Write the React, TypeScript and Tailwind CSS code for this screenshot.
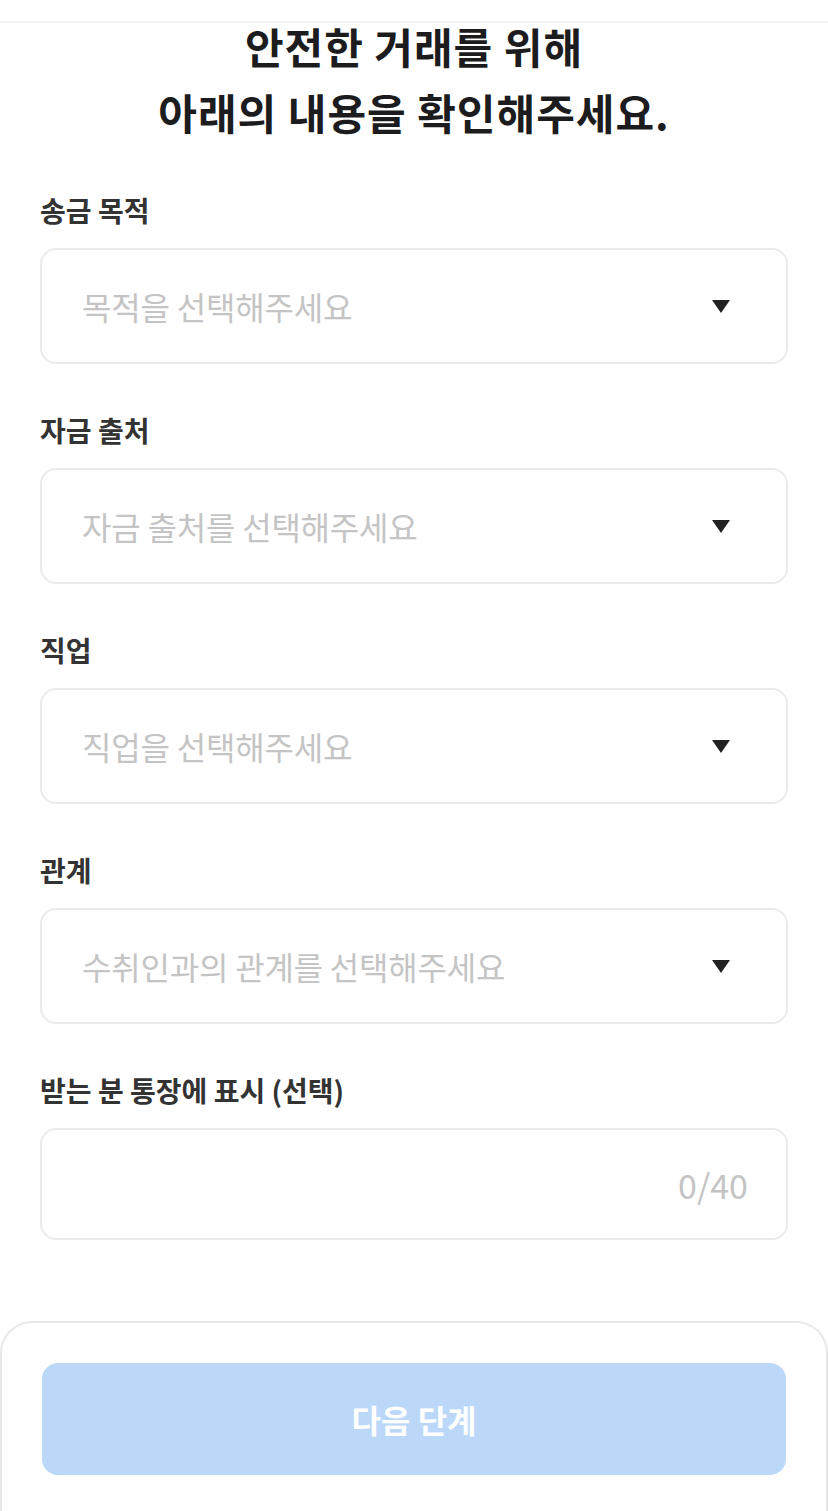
import React from "react";

const font = { fontFamily: '"Noto Sans CJK KR", "Noto Sans", sans-serif' };

function Caret() {
  return (
    <svg width="18" height="13" viewBox="0 0 18 13" className="shrink-0">
      <path d="M0 0 H18 L9 13 Z" fill="#222222" />
    </svg>
  );
}

function SelectField({ label, placeholder }: { label: string; placeholder: string }) {
  return (
    <div className="flex flex-col">
      <div className="h-[36px] flex items-center text-[28px] font-bold text-[#333333]">{label}</div>
      <div className="mt-[20px] h-[116px] rounded-[16px] border-2 border-[#ebebeb] flex items-center justify-between pl-[40px] pr-[56px]">
        <span className="text-[32px] text-[#c4c4c4] tracking-[-0.2px]">{placeholder}</span>
        <Caret />
      </div>
    </div>
  );
}

export default function App() {
  return (
    <div className="w-[828px] h-[1511px] bg-white relative overflow-hidden" style={font}>
      <div className="h-[23px] border-b-2 border-[#f2f2f2]" />
      <h1 className="-mt-[10px] text-center text-[42px] font-bold leading-[66px] text-[#1c1c1e] tracking-[1px]">
        안전한 거래를 위해
        <br />
        아래의 내용을 확인해주세요.
      </h1>
      <div className="px-[40px] mt-[47px] flex flex-col gap-[48px]">
        <SelectField label="송금 목적" placeholder="목적을 선택해주세요" />
        <SelectField label="자금 출처" placeholder="자금 출처를 선택해주세요" />
        <SelectField label="직업" placeholder="직업을 선택해주세요" />
        <SelectField label="관계" placeholder="수취인과의 관계를 선택해주세요" />
        <div className="flex flex-col">
          <div className="h-[36px] flex items-center text-[28px] font-bold text-[#333333]">
            받는 분 통장에 표시 (선택)
          </div>
          <div className="mt-[20px] h-[112px] rounded-[16px] border-2 border-[#ebebeb] flex items-center justify-end pr-[38px]">
            <span className="text-[34px] text-[#c4c4c4]">0/40</span>
          </div>
        </div>
      </div>
      <div className="absolute left-0 right-0 bottom-0 h-[190px] rounded-t-[32px] border-2 border-b-0 border-[#e8e8e8] bg-white px-[40px] pt-[40px]">
        <button className="w-full h-[112px] rounded-[16px] bg-[#bbd8f9] text-white text-[32px] font-bold">
          다음 단계
        </button>
      </div>
    </div>
  );
}
